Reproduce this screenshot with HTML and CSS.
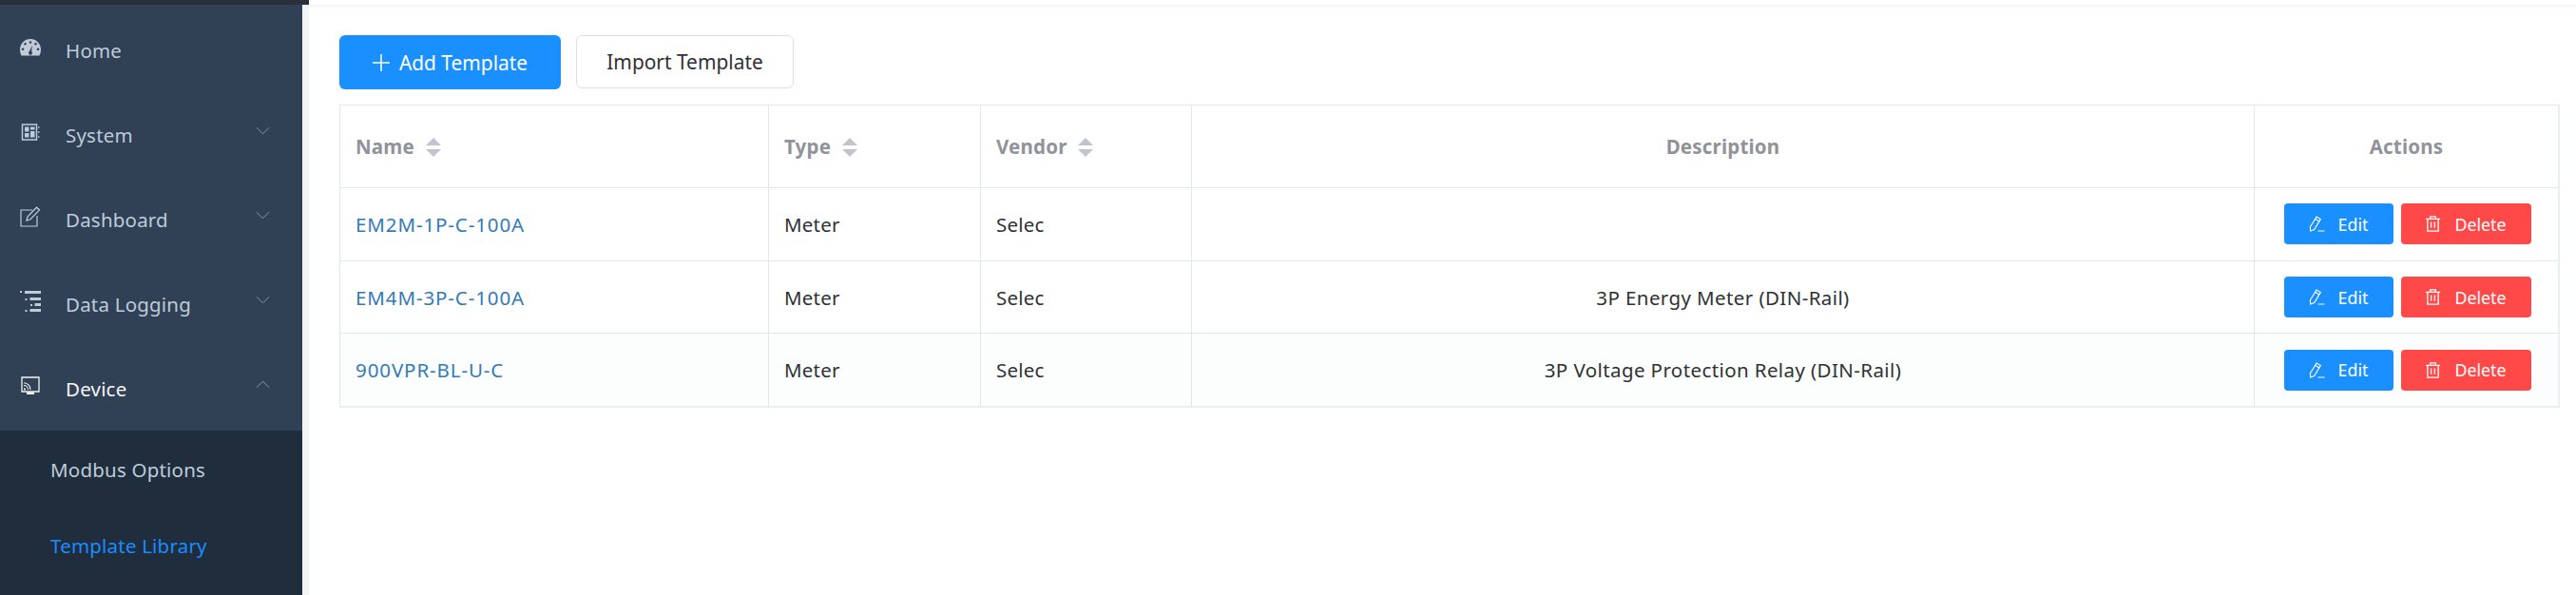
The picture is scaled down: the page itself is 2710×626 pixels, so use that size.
FILE: index.html
```html
<!DOCTYPE html>
<html lang="en">
  <head>
    <meta charset="UTF-8" />
    <meta name="viewport" content="width=device-width, initial-scale=1.0" />
    <title>Template Library</title>
    <link rel="stylesheet" href="styles.css">
  </head>
  <body>
    <div class="container">
      <div class="sidebar">
        <div class="sidebar-top"></div>
        <div class="sidebar-menu">
          <div class="menu-item">
            <svg class="menu-icon" viewBox="0 0 22 18"><path fill="currentColor" fill-rule="evenodd" d="M11 0C5 0 0 4.800 0 11c0 2.500.6 4.500 1.500 6.500h19c.9-2 1.500-4 1.500-6.500C22 4.800 17 0 11 0zM11 2.200a1.300 1.300 0 1 1 0 2.600 1.300 1.300 0 0 1 0-2.600zM5.500 4a1.300 1.300 0 1 1 0 2.600 1.300 1.300 0 0 1 0-2.600zM16.500 4a1.300 1.300 0 1 1 0 2.600 1.300 1.300 0 0 1 0-2.600zM3 9.500a1.300 1.300 0 1 1 0 2.600 1.300 1.300 0 0 1 0-2.600zM19 9.500a1.300 1.300 0 1 1 0 2.600 1.300 1.300 0 0 1 0-2.600zM13 6.500l-.9 6.500a2 2 0 1 1-2.200 0z"/></svg>
            <span>Home</span>
          </div>
          <div class="menu-item">
            <svg class="menu-icon" viewBox="0 0 22 18"><path fill="none" stroke="currentColor" stroke-width="1.500" d="M2.500 1h15v16h-15z"/><path fill="currentColor" d="M5 3.500h4.500v5H5zM11 3.500h4.500v3H11zM5 10h4.500v4.500H5zM11 8h4.500v6.500H11z"/><path stroke="currentColor" stroke-width="1.500" d="M19 4h1.500M19 9h1.500M19 14h1.500"/></svg>
            <span>System</span>
            <svg class="menu-arrow" viewBox="0 0 16 9"><path fill="none" stroke="currentColor" d="M1 1l7 7 7-7"/></svg>
          </div>
          <div class="menu-item">
            <svg class="menu-icon" viewBox="0 0 22 22"><path fill="none" stroke="currentColor" stroke-width="1.200" d="M13 4H1v17h17V10"/><path fill="none" stroke="currentColor" stroke-width="1.300" d="M7 15l1-4L17.500 1.200l3 2.700L11 13.800z"/></svg>
            <span>Dashboard</span>
            <svg class="menu-arrow" viewBox="0 0 16 9"><path fill="none" stroke="currentColor" d="M1 1l7 7 7-7"/></svg>
          </div>
          <div class="menu-item">
            <svg class="menu-icon" viewBox="0 0 22 22"><path fill="currentColor" d="M0 0h2v2H0zM5 0h17v3H5zM5.500 8h2v2h-2zM10.500 7H22v3H10.500zM11 14h2v2h-2zM15.500 13H22v3h-6.500zM5.500 20h2v2h-2zM10.500 19H22v3H10.500z"/></svg>
            <span>Data Logging</span>
            <svg class="menu-arrow" viewBox="0 0 16 9"><path fill="none" stroke="currentColor" d="M1 1l7 7 7-7"/></svg>
          </div>
          <div class="menu-item active">
            <svg class="menu-icon" viewBox="0 0 22 20"><path fill="none" stroke="currentColor" stroke-width="1.300" d="M2 1h18v15H2z"/><path fill="currentColor" d="M7 16.500h8V19H7zM4 12.500h1.800v2H4z"/><path fill="none" stroke="currentColor" stroke-width="1.100" d="M4 9.500a4.500 4.500 0 0 1 4.500 4.500M4 6.800A7.200 7.200 0 0 1 11 14"/></svg>
            <span>Device</span>
            <svg class="menu-arrow" viewBox="0 0 16 9"><path fill="none" stroke="currentColor" d="M1 8l7-7 7 7"/></svg>
          </div>
          <div class="submenu">
            <div class="submenu-item">Modbus Options</div>
            <div class="submenu-item current">Template Library</div>
          </div>
        </div>
      </div>
      <div class="main">
        <div class="topbar"></div>
        <div class="toolbar">
          <button class="btn btn-primary">
            <svg class="plus" viewBox="0 0 18 18"><path stroke="currentColor" stroke-width="1.500" d="M9 0v18M0 9h18"/></svg>
            Add Template
          </button>
          <button class="btn btn-default">Import Template</button>
        </div>
        <table class="table">
          <colgroup>
            <col class="col-name" />
            <col class="col-type" />
            <col class="col-vendor" />
            <col />
            <col class="col-actions" />
          </colgroup>
          <thead>
            <tr>
              <th class="left">Name <svg class="sort" viewBox="0 0 16 20"><path fill="currentColor" d="M8 0l8 8H0zM8 20l-8-8h16z"/></svg></th>
              <th class="left">Type <svg class="sort" viewBox="0 0 16 20"><path fill="currentColor" d="M8 0l8 8H0zM8 20l-8-8h16z"/></svg></th>
              <th class="left">Vendor <svg class="sort" viewBox="0 0 16 20"><path fill="currentColor" d="M8 0l8 8H0zM8 20l-8-8h16z"/></svg></th>
              <th>Description</th>
              <th>Actions</th>
            </tr>
          </thead>
          <tbody>
            <tr>
              <td class="left"><a class="link">EM2M-1P-C-100A</a></td>
              <td class="left">Meter</td>
              <td class="left">Selec</td>
              <td></td>
              <td>
                <div class="actions">
                  <button class="btn-small btn-edit"><svg class="small-icon" viewBox="0 0 18 18"><path fill="none" stroke="currentColor" stroke-width="1.200" d="M1.500 12.500L8.500 1l4.500 2.800-7 11.500-4.200 1.700zM7 3.500l4.500 2.800M10 17h7.500"/></svg>Edit</button>
                  <button class="btn-small btn-delete"><svg class="small-icon" viewBox="0 0 18 18"><path fill="none" stroke="currentColor" stroke-width="1.400" d="M1 3.500h16M6 3.500V1h6v2.500M3 3.500V17h12V3.500M7 7v6.500M11 7v6.500"/></svg>Delete</button>
                </div>
              </td>
            </tr>
            <tr>
              <td class="left"><a class="link">EM4M-3P-C-100A</a></td>
              <td class="left">Meter</td>
              <td class="left">Selec</td>
              <td class="desc">3P Energy Meter (DIN-Rail)</td>
              <td>
                <div class="actions">
                  <button class="btn-small btn-edit"><svg class="small-icon" viewBox="0 0 18 18"><path fill="none" stroke="currentColor" stroke-width="1.200" d="M1.500 12.500L8.500 1l4.500 2.800-7 11.500-4.200 1.700zM7 3.500l4.500 2.800M10 17h7.500"/></svg>Edit</button>
                  <button class="btn-small btn-delete"><svg class="small-icon" viewBox="0 0 18 18"><path fill="none" stroke="currentColor" stroke-width="1.400" d="M1 3.500h16M6 3.500V1h6v2.500M3 3.500V17h12V3.500M7 7v6.500M11 7v6.500"/></svg>Delete</button>
                </div>
              </td>
            </tr>
            <tr class="striped">
              <td class="left"><a class="link">900VPR-BL-U-C</a></td>
              <td class="left">Meter</td>
              <td class="left">Selec</td>
              <td class="desc">3P Voltage Protection Relay (DIN-Rail)</td>
              <td>
                <div class="actions">
                  <button class="btn-small btn-edit"><svg class="small-icon" viewBox="0 0 18 18"><path fill="none" stroke="currentColor" stroke-width="1.200" d="M1.500 12.500L8.500 1l4.500 2.800-7 11.500-4.200 1.700zM7 3.500l4.500 2.800M10 17h7.500"/></svg>Edit</button>
                  <button class="btn-small btn-delete"><svg class="small-icon" viewBox="0 0 18 18"><path fill="none" stroke="currentColor" stroke-width="1.400" d="M1 3.500h16M6 3.500V1h6v2.500M3 3.500V17h12V3.500M7 7v6.500M11 7v6.500"/></svg>Delete</button>
                </div>
              </td>
            </tr>
          </tbody>
        </table>
      </div>
    </div>
  </body>
</html>
```

FILE: styles.css
```css
body {
  margin: 0;
  font-family: "Noto Sans", Arial, sans-serif;
  font-size: 20.5px;
  background-color: #fff;
  overflow: hidden;
}

.container {
  display: flex;
  height: 626px;
}

.sidebar {
  width: 325px;
  flex-shrink: 0;
  display: flex;
  flex-direction: column;
  background-color: #f3f4f5;
}

.sidebar-top {
  height: 5px;
  flex-shrink: 0;
  background-color: #2b2f3a;
}

.sidebar-menu {
  width: 318px;
  flex: 1;
  padding-top: 3px;
  letter-spacing: 0.2px;
  background-color: #304156;
}

.menu-item {
  display: flex;
  align-items: center;
  height: 89px;
  padding: 0 34px 0 21px;
  color: #bfcbd9;
}

.menu-item span {
  flex: 1;
}

.menu-item.active {
  color: #f4f4f5;
}

.menu-icon {
  width: 22px;
  height: 22px;
  margin-right: 26px;
  position: relative;
  top: -3px;
}

.menu-arrow {
  width: 15px;
  height: 9px;
  color: #8f9bab;
  position: relative;
  top: -4px;
}

.submenu {
  background-color: #1f2d3d;
  padding-bottom: 13px;
}

.submenu-item {
  display: flex;
  align-items: center;
  height: 78px;
  padding-top: 2px;
  padding-left: 53px;
  color: #bfcbd9;
}

.submenu-item.current {
  color: #1a8cff;
}

.main {
  flex: 1;
  min-width: 0;
  padding-right: 17px;
  padding-left: 32px;
}

.topbar {
  height: 5px;
  margin: 0 -17px 0 -32px;
  box-shadow: 0 1px 4px rgba(0, 21, 41, 0.08);
}

.toolbar {
  display: flex;
  align-items: flex-start;
  gap: 16px;
  padding: 32px 0 16px;
}

.btn {
  display: flex;
  align-items: center;
  justify-content: center;
  height: 57px;
  border-radius: 6px;
  font-family: inherit;
  font-size: 20.9px;
  cursor: pointer;
}

.btn-primary {
  width: 233px;
  border: none;
  color: #fff;
  background-color: #1a8fff;
}

.plus {
  width: 18px;
  height: 18px;
  margin-right: 10px;
}

.btn-default {
  width: 229px;
  height: 56px;
  border: 1px solid #dcdfe6;
  color: #303133;
  background-color: #fff;
}

.table {
  width: 2336px;
  table-layout: fixed;
  border-collapse: separate;
  border-spacing: 0;
  border-top: 1px solid #dfe6ec;
  border-left: 1px solid #dfe6ec;
  border-right: 2px solid #e9edf7;
  border-bottom: 2px solid #e9edf7;
  color: #303133;
}

.col-name {
  width: 451px;
}

.col-type {
  width: 223px;
}

.col-vendor {
  width: 222px;
}

.col-actions {
  width: 319px;
}

th,
td {
  padding: 0;
  text-align: center;
  font-weight: normal;
  border-bottom: 1px solid #dfe6ec;
  border-right: 1px solid #dfe6ec;
}

tr:last-child td {
  border-bottom: none;
}

th:last-child,
td:last-child {
  border-right: none;
}

th {
  height: 86px;
  color: #909399;
  font-weight: bold;
  letter-spacing: 0.2px;
  vertical-align: middle;
}

td {
  height: 75.7px;
  letter-spacing: 0.2px;
}

.left {
  text-align: left;
  padding-left: 16px;
}

.link {
  color: #337ab7;
  letter-spacing: 0.9px;
}

.desc {
  letter-spacing: 0.4px;
}

.sort {
  width: 16px;
  height: 20px;
  margin-left: 6px;
  color: #c0c4cc;
  vertical-align: -3px;
}

.striped td {
  background-color: #fcfefe;
}

.actions {
  display: flex;
  justify-content: center;
  gap: 8px;
  padding-left: 2px;
}

.btn-small {
  display: flex;
  align-items: center;
  justify-content: center;
  height: 43px;
  border: none;
  border-radius: 4px;
  color: #fff;
  font-family: inherit;
  font-size: 17.8px;
  cursor: pointer;
}

.btn-edit {
  width: 115px;
  background-color: #1a8fff;
}

.btn-delete {
  width: 137px;
  background-color: #ff4949;
}

.small-icon {
  width: 17px;
  height: 17px;
  margin-right: 14px;
}
```
